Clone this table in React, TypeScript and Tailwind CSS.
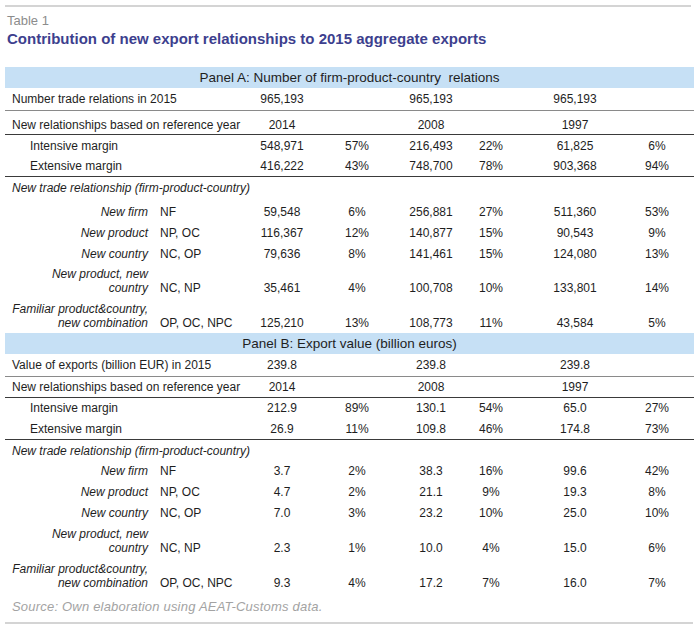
import React from "react";

type RowProps = { cls: string; label: React.ReactNode; v: string[] };

function Row({ cls, label, v }: RowProps) {
  return (
    <div className={`grid grid-cols-[240px_74px_76px_72px_48px_120px_59px] ${cls}`}>
      {label}
      {v.map((x, i) => (
        <div key={i} className={i === 5 ? "text-center pr-[15px]" : "text-center"}>
          {x}
        </div>
      ))}
    </div>
  );
}

function Sub({ name, code, two }: { name: React.ReactNode; code: string; two?: boolean }) {
  return (
    <div className={two ? "flex items-end" : "flex items-center"}>
      <span className="w-[143px] text-right italic whitespace-nowrap">{name}</span>
      <span className="pl-[12px] whitespace-nowrap">{code}</span>
    </div>
  );
}

function Band({ text }: { text: string }) {
  return (
    <div className="h-[21px] bg-[#c6e0f5] flex items-center justify-center text-[13.5px] leading-[16px] whitespace-pre">
      {text}
    </div>
  );
}

export default function App() {
  return (
    <div className="w-[696px] h-[628px] bg-white font-['Liberation_Sans',Arial,sans-serif] text-[#1e1e1e] overflow-hidden">
      <div className="ml-[5px] w-[689px] pt-[5px]">
        <div className="h-[2px] bg-[#d4d4d4] w-[686px]" />
        <div className="mt-[6px] pl-[2px] text-[13px] leading-[16px] text-[#8c8c8c]">Table 1</div>
        <div className="pl-[2px] text-[15px] leading-[20px] font-bold text-[#3d3f8e] whitespace-nowrap">
          Contribution of new export relationships to 2015 aggregate exports
        </div>
        <div className="mt-[18px] text-[12px] leading-[14px]">
          <Band text="Panel A: Number of firm-product-country  relations" />
          <Row
            cls="h-[23px] items-center border-b border-[#8a8a8a]"
            label={<div className="pl-[7px]">Number trade relations in 2015</div>}
            v={["965,193", "", "965,193", "", "965,193", ""]}
          />
          <Row
            cls="h-[24px] pt-[4px] items-center border-b border-[#3a3a3a]"
            label={<div className="pl-[7px] whitespace-nowrap">New relationships based on reference year</div>}
            v={["2014", "", "2008", "", "1997", ""]}
          />
          <Row
            cls="h-[21px] items-center"
            label={<div className="pl-[25px]">Intensive margin</div>}
            v={["548,971", "57%", "216,493", "22%", "61,825", "6%"]}
          />
          <Row
            cls="h-[21px] items-center border-b border-[#3a3a3a]"
            label={<div className="pl-[25px]">Extensive margin</div>}
            v={["416,222", "43%", "748,700", "78%", "903,368", "94%"]}
          />
          <div className="h-[24px] pb-[2px] flex items-center pl-[7px] italic whitespace-nowrap">
            New trade relationship (firm-product-country)
          </div>
          <Row cls="h-[21px] items-center" label={<Sub name="New firm" code="NF" />} v={["59,548", "6%", "256,881", "27%", "511,360", "53%"]} />
          <Row cls="h-[21px] items-center" label={<Sub name="New product" code="NP, OC" />} v={["116,367", "12%", "140,877", "15%", "90,543", "9%"]} />
          <Row cls="h-[21px] items-center" label={<Sub name="New country" code="NC, OP" />} v={["79,636", "8%", "141,461", "15%", "124,080", "13%"]} />
          <Row
            cls="h-[35px] pb-[4px] items-end"
            label={<Sub two name={<>New product, new<br />country</>} code="NC, NP" />}
            v={["35,461", "4%", "100,708", "10%", "133,801", "14%"]}
          />
          <Row
            cls="h-[34px] pb-[3px] items-end"
            label={<Sub two name={<>Familiar product&amp;country,<br />new combination</>} code="OP, OC, NPC" />}
            v={["125,210", "13%", "108,773", "11%", "43,584", "5%"]}
          />

          <Band text="Panel B: Export value (billion euros)" />
          <Row
            cls="h-[23px] items-center border-b border-[#8a8a8a]"
            label={<div className="pl-[7px]">Value of exports (billion EUR) in 2015</div>}
            v={["239.8", "", "239.8", "", "239.8", ""]}
          />
          <Row
            cls="h-[21px] items-center border-b border-[#3a3a3a]"
            label={<div className="pl-[7px] whitespace-nowrap">New relationships based on reference year</div>}
            v={["2014", "", "2008", "", "1997", ""]}
          />
          <Row
            cls="h-[20px] items-center"
            label={<div className="pl-[25px]">Intensive margin</div>}
            v={["212.9", "89%", "130.1", "54%", "65.0", "27%"]}
          />
          <Row
            cls="h-[22px] items-center border-b border-[#3a3a3a]"
            label={<div className="pl-[25px]">Extensive margin</div>}
            v={["26.9", "11%", "109.8", "46%", "174.8", "73%"]}
          />
          <div className="h-[21px] flex items-center pl-[7px] italic whitespace-nowrap">
            New trade relationship (firm-product-country)
          </div>
          <Row cls="h-[20px] items-center" label={<Sub name="New firm" code="NF" />} v={["3.7", "2%", "38.3", "16%", "99.6", "42%"]} />
          <Row cls="h-[21px] items-center" label={<Sub name="New product" code="NP, OC" />} v={["4.7", "2%", "21.1", "9%", "19.3", "8%"]} />
          <Row cls="h-[22px] items-center" label={<Sub name="New country" code="NC, OP" />} v={["7.0", "3%", "23.2", "10%", "25.0", "10%"]} />
          <Row
            cls="h-[35px] pb-[4px] items-end"
            label={<Sub two name={<>New product, new<br />country</>} code="NC, NP" />}
            v={["2.3", "1%", "10.0", "4%", "15.0", "6%"]}
          />
          <Row
            cls="h-[34px] pb-[3px] items-end"
            label={<Sub two name={<>Familiar product&amp;country,<br />new combination</>} code="OP, OC, NPC" />}
            v={["9.3", "4%", "17.2", "7%", "16.0", "7%"]}
          />
        </div>
        <div className="mt-[6px] pl-[7px] text-[13px] leading-[16px] italic text-[#a3a3a3] tracking-[0.2px] whitespace-nowrap">
          Source: Own elaboration using AEAT-Customs data.
        </div>
        <div className="mt-[7px] h-[2px] bg-[#d4d4d4] w-[688px]" />
      </div>
    </div>
  );
}
